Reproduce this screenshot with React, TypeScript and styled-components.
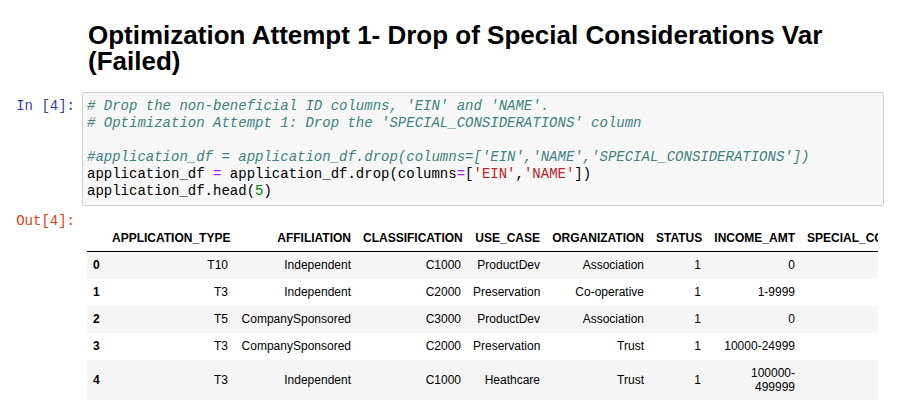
import styled, { createGlobalStyle } from 'styled-components'

const GlobalStyle = createGlobalStyle`
  body {
    margin: 0;
    background: #fff;
    font-family: "Liberation Sans", Helvetica, Arial, sans-serif;
    color: #000;
  }
`

const Notebook = styled.div`
  width: 903px;
  height: 417px;
  overflow: hidden;
  display: flex;
  flex-direction: column;
`

const MarkdownCell = styled.div`
  padding-left: 88px;
  padding-right: 20px;
`

const Title = styled.h1`
  margin: 22px 0 0 0;
  font-size: 26px;
  line-height: 1;
  font-weight: bold;
`

const CellRow = styled.div<{ $top: number }>`
  display: flex;
  align-items: flex-start;
  margin-top: ${p => p.$top}px;
`

const Prompt = styled.div<{ $color: string; $top: number }>`
  width: 82px;
  box-sizing: border-box;
  padding: ${p => p.$top}px 7px 0 0;
  text-align: right;
  font-family: "Liberation Mono", Menlo, monospace;
  font-size: 14px;
  line-height: 17px;
  color: ${p => p.$color};
  flex-shrink: 0;
`

const InputArea = styled.div`
  flex: 1;
  margin-right: 19px;
  border: 1px solid #cfcfcf;
  border-radius: 2px;
  background: #f7f7f7;
  padding: 5px 4px;
  font-family: "Liberation Mono", Menlo, monospace;
  font-size: 14px;
  line-height: 17px;
  color: #000;
`

const CodeLine = styled.div`
  white-space: pre;
  min-height: 17px;
`

const Comment = styled.span`
  color: #408080;
  font-style: italic;
`

const Str = styled.span`
  color: #ba2121;
`

const Op = styled.span`
  color: #aa22ff;
`

const Num = styled.span`
  color: #008800;
`

const OutputArea = styled.div`
  flex: 1;
  margin-right: 25px;
  padding: 17px 0 0 5px;
  overflow: hidden;
`

const Table = styled.table<{ $width: number }>`
  border-collapse: collapse;
  border-spacing: 0;
  table-layout: fixed;
  width: ${p => p.$width}px;
  font-size: 12px;
  color: #000;
`

const Head = styled.thead`
  border-bottom: 1px solid #000;
  vertical-align: bottom;
`

const HeadCell = styled.th<{ $w: number }>`
  width: ${p => p.$w}px;
  box-sizing: border-box;
  padding: 6px;
  line-height: 14px;
  text-align: right;
  font-weight: bold;
  white-space: nowrap;
`

const Row = styled.tr`
  height: 27px;
  &:nth-child(odd) {
    background: #f5f5f5;
  }
`

const IndexCell = styled.th`
  padding: 6px;
  line-height: 14px;
  text-align: left;
  font-weight: bold;
  vertical-align: middle;
`

const Cell = styled.td`
  padding: 6px;
  line-height: 14px;
  text-align: right;
  vertical-align: middle;
`

const columns: [string, number][] = [
  ['', 19],
  ['APPLICATION_TYPE', 128],
  ['AFFILIATION', 123],
  ['CLASSIFICATION', 110],
  ['USE_CASE', 79],
  ['ORGANIZATION', 104],
  ['STATUS', 57],
  ['INCOME_AMT', 94],
  ['SPECIAL_CONSIDERATIONS', 170],
]

const rows = [
  ['T10', 'Independent', 'C1000', 'ProductDev', 'Association', '1', '0', 'N'],
  ['T3', 'Independent', 'C2000', 'Preservation', 'Co-operative', '1', '1-9999', 'N'],
  ['T5', 'CompanySponsored', 'C3000', 'ProductDev', 'Association', '1', '0', 'N'],
  ['T3', 'CompanySponsored', 'C2000', 'Preservation', 'Trust', '1', '10000-24999', 'N'],
  ['T3', 'Independent', 'C1000', 'Heathcare', 'Trust', '1', '100000-499999', 'N'],
]

const tableWidth = columns.reduce((sum, [, w]) => sum + w, 0)

function App() {
  return (
    <Notebook>
      <GlobalStyle />
      <MarkdownCell>
        <Title>Optimization Attempt 1- Drop of Special Considerations Var (Failed)</Title>
      </MarkdownCell>

      <CellRow $top={18}>
        <Prompt $color="#303f9f" $top={6}>In [4]:</Prompt>
        <InputArea>
          <CodeLine><Comment># Drop the non-beneficial ID columns, 'EIN' and 'NAME'.</Comment></CodeLine>
          <CodeLine><Comment># Optimization Attempt 1: Drop the 'SPECIAL_CONSIDERATIONS' column</Comment></CodeLine>
          <CodeLine />
          <CodeLine><Comment>#application_df = application_df.drop(columns=['EIN','NAME','SPECIAL_CONSIDERATIONS'])</Comment></CodeLine>
          <CodeLine>
            application_df <Op>=</Op> application_df.drop(columns<Op>=</Op>[<Str>'EIN'</Str>,<Str>'NAME'</Str>])
          </CodeLine>
          <CodeLine>application_df.head(<Num>5</Num>)</CodeLine>
        </InputArea>
      </CellRow>

      <CellRow $top={2}>
        <Prompt $color="#d84315" $top={5}>Out[4]:</Prompt>
        <OutputArea>
          <Table $width={tableWidth}>
            <Head>
              <tr>
                {columns.map(([name, w], i) => (
                  <HeadCell key={i} $w={w}>{name}</HeadCell>
                ))}
              </tr>
            </Head>
            <tbody>
              {rows.map((row, i) => (
                <Row key={i}>
                  <IndexCell>{i}</IndexCell>
                  {row.map((value, j) => (
                    <Cell key={j}>{value}</Cell>
                  ))}
                </Row>
              ))}
            </tbody>
          </Table>
        </OutputArea>
      </CellRow>
    </Notebook>
  )
}

export default App
